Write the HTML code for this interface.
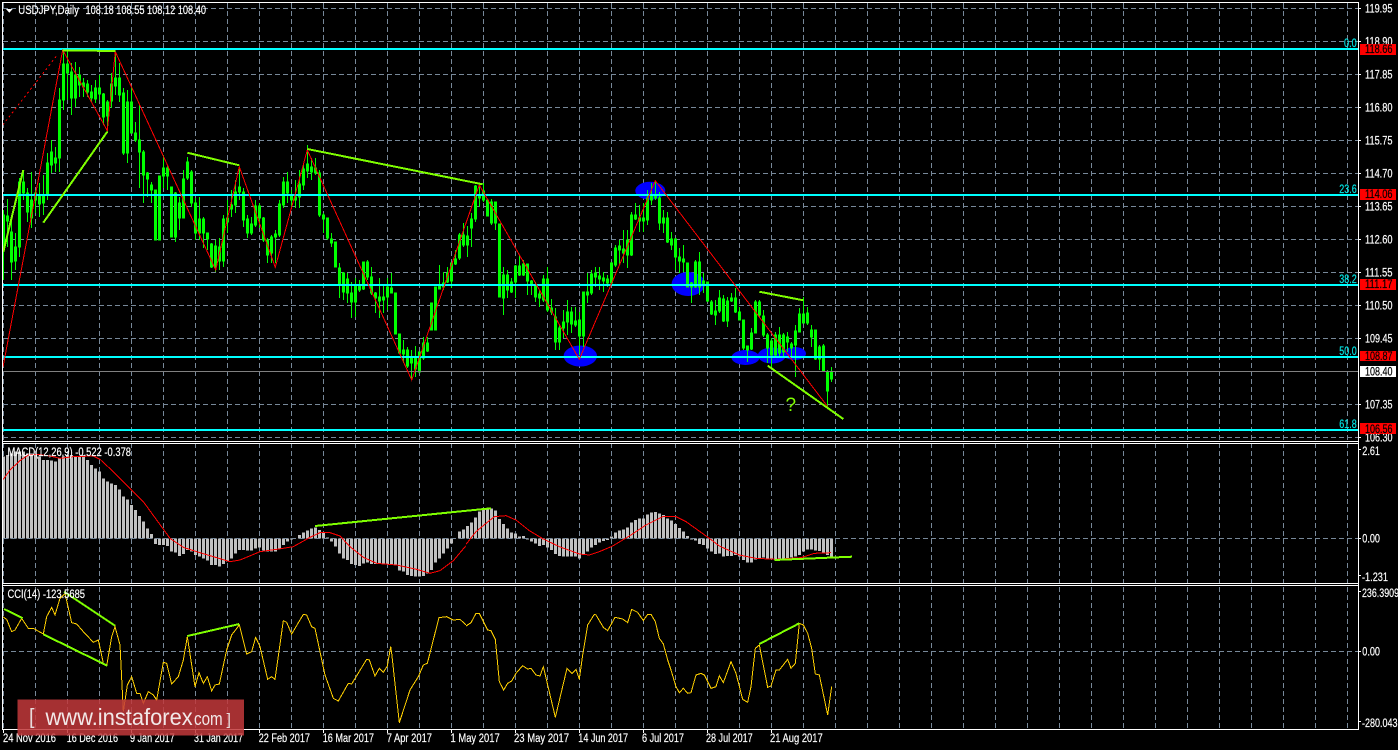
<!DOCTYPE html>
<html><head><meta charset="utf-8"><title>USDJPY,Daily</title>
<style>
html,body{margin:0;padding:0;background:#000;width:1398px;height:750px;overflow:hidden}
svg{display:block}
text{font-family:"Liberation Sans",sans-serif;font-size:11.5px;fill:#fff;stroke:#fff;stroke-width:.18px}
.f{fill:#00e6e6;stroke:#00e6e6}
.k{fill:#000;stroke:#000}
.w{stroke:none}
</style></head><body>
<svg width="1398" height="750" viewBox="0 0 1398 750" xmlns="http://www.w3.org/2000/svg">
<defs>
<pattern id="v" x="35" y="3" width="32" height="8" patternUnits="userSpaceOnUse"><rect width="1" height="5" fill="#778899"/></pattern>
<pattern id="h" x="3" y="8" width="8" height="33" patternUnits="userSpaceOnUse"><rect width="5" height="1" fill="#778899"/></pattern>
<clipPath id="c1"><rect x="3" y="3" width="1355" height="438"/></clipPath>
<clipPath id="c2"><rect x="3" y="444" width="1355" height="139"/></clipPath>
<clipPath id="c3"><rect x="3" y="586" width="1355" height="143"/></clipPath>
</defs>
<rect width="1398" height="750" fill="#000"/>
<!-- grid -->
<rect x="3" y="3" width="1355" height="438" fill="url(#v)"/>
<rect x="3" y="3" width="1355" height="438" fill="url(#h)"/>
<rect x="3" y="444" width="1355" height="139" fill="url(#v)"/>
<rect x="3" y="586" width="1355" height="143" fill="url(#v)"/>
<!-- blue ellipses -->
<g fill="#0000ff">
<ellipse cx="650.3" cy="190.7" rx="15" ry="9"/>
<ellipse cx="688.3" cy="284" rx="16.7" ry="12"/>
<ellipse cx="580.3" cy="356" rx="16.7" ry="10.5"/>
<ellipse cx="745.5" cy="357.5" rx="14" ry="7.5"/>
<ellipse cx="771.8" cy="355.5" rx="14" ry="8"/>
<ellipse cx="794.5" cy="353.5" rx="11.5" ry="6.5"/>
</g>
<!-- candles -->
<g transform="translate(-.5 0)" fill="none" shape-rendering="crispEdges" clip-path="url(#c1)">
<path stroke="#00ff00" stroke-width="1" d="M4 210V280M8 199V247M12 217V280M16 233V270M20 178V257M24 170V200M28 188V222M32 172V228M36 190V213M40 183V217M44 175V215M48 153V200M52 140V173M56 147V172M60 88V172M64 50V110M68 50V100M72 63V115M76 62V107M80 67V97M84 78V97M88 80V97M92 85V102M96 80V103M100 75V100M104 93V125M108 100V132M112 73V108M116 52V95M120 63V102M124 88V155M128 90V163M132 87V133M136 122V142M140 105V188M144 150V203M148 172V197M152 182V203M156 190V240M160 176V240M164 155V188M168 165V190M172 187V237M176 192V242M180 197V230M184 170V218M188 157V180M192 170V207M196 198V240M200 197V240M204 217V248M208 233V250M212 243V268M216 240V272M220 238V270M224 215V267M228 200V233M232 190V217M236 180V213M240 167V200M244 188V227M248 215V238M252 217V235M256 200V227M260 203V228M264 217V242M268 238V263M272 235V263M276 230V263M280 200V237M284 177V208M288 172V203M292 190V208M296 180V208M300 170V208M304 163V190M308 145V178M312 158V180M316 158V175M320 170V217M324 213V233M328 218V240M332 233V247M336 242V267M340 263V298M344 272V300M348 273V303M352 282V318M356 278V317M360 280V292M364 262V290M368 260V280M372 267V295M376 292V313M380 278V318M384 285V313M388 278V310M392 273V293M396 293V334M400 334V353M404 340V363M408 347V368M412 350V380M416 346V377M420 352V372M424 337V360M428 337V352M432 303V330M436 287V330M440 265V288M444 272V290M448 267V283M452 263V288M456 250V265M460 233V260M464 223V247M468 226V257M472 213V247M476 185V222M480 183V207M484 183V202M488 200V216M492 199V225M496 202V230M500 224V297M504 267V315M508 270V298M512 278V293M516 265V298M520 255V276M524 260V276M528 264V295M532 280V295M536 282V302M540 290V307M544 275V302M548 267V312M552 299V315M556 308V350M560 325V350M564 310V338M568 300V335M572 307V333M576 307V327M580 312V355M584 292V347M588 273V303M592 270V295M596 267V287M600 267V290M604 272V292M608 275V287M612 262V283M616 245V267M620 240V265M624 230V263M628 230V268M632 212V256M636 203V220M640 205V232M644 203V232M648 190V225M652 183V205M656 182V200M660 192V230M664 210V233M668 212V243M672 232V250M676 238V270M680 248V273M684 245V272M688 263V287M692 282V303M696 260V288M700 252V295M704 273V293M708 282V302M712 300V315M716 300V325M720 290V313M724 295V322M728 297V327M732 293V302M736 288V313M740 307V320M744 320V350M748 347V362M752 328V350M756 300V333M760 300V317M764 310V337M768 333V363M772 338V367M776 332V357M780 327V357M784 333V358M788 332V352M792 342V358M796 325V377M800 308V332M804 297V323M808 307V325M812 325V347M816 330V360M820 345V370M824 344V371M828 370V407M832 367V382"/>
<path id="b" stroke="#00ff00" stroke-width="3" stroke-linecap="square" d="M4 216V249M8 217V220M12 233V261M16 248V260M20 183V246M24 183V192M28 194V211M32 201V217M36 194V199M40 196V203M44 196V202M48 164V194M52 153V164M56 159V162M60 101V157M64 65V99M68 65V72M72 73V97M76 76V97M80 76V84M84 84V86M88 85V91M92 93V97M96 89V98M100 89V93M104 95V116M108 103V115M112 85V100M116 79V85M120 79V94M124 94V152M128 103V152M132 103V132M136 134V139M140 141V151M144 153V174M148 174V178M152 186V189M156 191V239M160 177V239M164 169V175M168 169V175M172 188V236M176 194V236M180 204V217M184 180V217M188 163V177M192 173V202M196 204V232M200 220V232M204 220V232M208 234V238M212 245V266M216 247V266M220 248V260M224 220V260M228 219V221M232 206V208M236 193V204M240 188V191M244 193V219M248 220V232M252 225V232M256 207V224M260 207V217M264 219V239M268 241V254M272 238V252M276 235V236M280 205V234M284 183V204M288 183V192M292 197V199M296 198V199M300 185V196M304 170V184M308 165V170M312 168V171M316 169V172M320 174V214M324 216V218M328 219V237M332 240V242M336 243V266M340 269V283M344 274V291M348 280V292M352 294V301M356 286V301M360 286V289M364 263V288M368 263V276M372 278V292M376 294V297M380 298V300M384 298V299M388 288V296M392 289V292M396 294V333M400 335V352M404 351V353M408 351V365M412 358V362M416 358V368M420 353V371M424 344V357M428 344V350M432 304V329M436 288V329M440 287V288M444 284V286M448 274V281M452 264V280M456 260V263M460 236V257M464 236V244M468 237V244M472 220V227M476 187V218M480 196V197M484 192V199M488 201V215M492 203V222M496 203V222M500 225V296M504 276V297M508 276V289M512 283V291M516 267V281M520 267V274M524 265V274M528 265V280M532 282V283M536 286V296M540 295V297M544 280V299M548 280V309M552 309V311M556 318V341M560 329V341M564 323V327M568 313V321M572 313V323M576 322V324M580 321V335M584 293V335M588 293V294M592 275V292M596 274V276M600 277V278M604 279V280M608 280V282M612 264V282M616 249V264M620 247V249M624 250V252M628 241V254M632 216V254M636 216V218M640 219V220M644 219V220M648 199V219M652 196V199M656 196V197M660 199V222M664 219V222M668 219V241M672 240V244M676 240V256M680 258V260M684 260V261M688 264V286M692 284V286M696 263V286M700 263V286M704 282V283M708 283V300M712 303V313M716 312V314M720 299V310M724 300V320M728 302V320M732 299V300M736 299V311M740 313V319M744 321V347M748 347V349M752 334V348M756 303V332M760 303V314M764 317V334M768 336V347M772 342V354M776 336V354M780 336V352M784 336V351M788 338V341M792 345V347M796 332V344M800 315V331M804 315V322M808 314V322M812 331V336M816 331V358M820 348V358M824 347V370M828 373V390M832 373V378"/>
<use href="#b" style="stroke:#fff;stroke-width:1;stroke-linecap:butt"/>
</g>
<!-- levels -->
<g shape-rendering="crispEdges">
<rect x="3" y="371" width="1355" height="1" fill="#808080"/>
<g fill="#00ffff">
<rect x="3" y="48" width="1355" height="2"/>
<rect x="3" y="194" width="1355" height="2"/>
<rect x="3" y="284" width="1355" height="2"/>
<rect x="3" y="356" width="1355" height="2"/>
<rect x="3" y="429" width="1355" height="2"/>
</g>
</g>
<!-- zigzag -->
<polyline fill="none" stroke="#ff0000" stroke-width="1" shape-rendering="crispEdges" points="3,367 62.7,50 107.3,130.7 115.3,51.7 215.7,270 239.3,166.7 275.3,267.3 307.3,150 411.7,380 466,223 479.3,185 579.3,359.3 655.3,180.7 827.7,406.7"/>
<polyline fill="none" stroke="#ff0000" stroke-width="1" stroke-dasharray="2 3" shape-rendering="crispEdges" points="2.7,125 57.3,55"/>
<!-- chartreuse trend lines -->
<g stroke="#7fff00" stroke-width="2" fill="none" shape-rendering="crispEdges">
<path d="M3.3 251.7L23.3 170"/>
<path d="M43.3 222.7L107.3 131.7"/>
<path d="M62.7 50.3L115.3 51"/>
<path d="M187.3 152.7L239.3 165.3"/>
<path d="M307.3 149L482.7 184.3"/>
<path d="M759.3 291.7L803.3 300.3"/>
<path d="M767.7 365.7L843.3 419"/>
</g>
<text class="w" x="785.5" y="411" style="font-size:19px;fill:#7fff00">?</text>
<!-- MACD histogram -->
<g clip-path="url(#c2)">
<g transform="translate(-.5 440) scale(1 .33333)" shape-rendering="crispEdges">
<path fill="none" stroke="#c0c0c0" stroke-width="3" d="M4 295V50M8 295V45M12 295V40M16 295V35M20 295V35M24 295V35M28 295V40M32 295V40M36 295V42M40 295V50M44 295V60M48 295V60M52 295V62M56 295V65M60 295V55M64 295V50M68 295V45M72 295V45M76 295V48M80 295V48M84 295V45M88 295V60M92 295V75M96 295V85M100 295V95M104 295V115M108 295V125M112 295V130M116 295V135M120 295V148M124 295V170M128 295V178M132 295V195M136 295V210M140 295V228M144 295V245M148 295V265M152 295V282M156 295V312M160 295V315M164 295V315M168 295V318M172 295V335M176 295V338M180 295V348M184 295V342M188 295V330M192 295V335M196 295V345M200 295V350M204 295V355M208 295V362M212 295V375M216 295V375M220 295V380M224 295V372M228 295V365M232 295V355M236 295V340M240 295V330M244 295V330M248 295V332M252 295V332M256 295V325M260 295V322M264 295V332M268 295V335M272 295V335M276 295V335M280 295V325M284 295V315M288 295V305M292 295V298M296 295V296M300 295V285M304 295V278M308 295V272M312 295V265M316 295V262M320 295V270M324 295V278M328 295V292M332 295V305M336 295V320M340 295V340M344 295V355M348 295V360M352 295V372M356 295V375M360 295V378M364 295V370M368 295V368M372 295V372M376 295V372M380 295V372M384 295V372M388 295V372M392 295V372M396 295V375M400 295V392M404 295V395M408 295V405M412 295V408M416 295V410M420 295V410M424 295V408M428 295V400M432 295V390M436 295V368M440 295V355M444 295V340M448 295V325M452 295V310M456 295V296M460 295V275M464 295V268M468 295V258M472 295V247M476 295V232M480 295V215M484 295V210M488 295V208M492 295V205M496 295V212M500 295V237M504 295V252M508 295V265M512 295V277M516 295V280M520 295V290M524 295V288M528 295V298M532 295V305M536 295V310M540 295V318M544 295V315M548 295V322M552 295V330M556 295V342M560 295V348M564 295V350M568 295V350M572 295V350M576 295V350M580 295V355M584 295V345M588 295V335M592 295V322M596 295V315M600 295V308M604 295V303M608 295V300M612 295V290M616 295V278M620 295V272M624 295V268M628 295V262M632 295V248M636 295V240M640 295V236M644 295V235M648 295V224M652 295V218M656 295V216M660 295V220M664 295V225M668 295V235M672 295V242M676 295V252M680 295V264M684 295V274M688 295V288M692 295V298M696 295V302M700 295V312M704 295V315M708 295V325M712 295V335M716 295V342M720 295V340M724 295V350M728 295V348M732 295V348M736 295V345M740 295V350M744 295V360M748 295V368M752 295V368M756 295V358M760 295V355M764 295V352M768 295V355M772 295V355M776 295V360M780 295V360M784 295V358M788 295V355M792 295V352M796 295V350M800 295V345M804 295V335M808 295V328M812 295V328M816 295V332M820 295V333M824 295V340M828 295V345M832 295V350"/>
</g>
</g>
<path d="M3 538.5H1358" stroke="#778899" stroke-width="1" stroke-dasharray="5 3" fill="none" shape-rendering="crispEdges"/>
<g clip-path="url(#c2)" fill="none" stroke="#ff0000" stroke-width="3" shape-rendering="crispEdges">
<polyline transform="translate(0 440) scale(.33333)" points="10,118 30,90 60,62 85,45 115,43 150,48 180,55 220,50 280,48 300,58 340,95 390,145 430,185 470,240 510,295 550,322 590,335 640,350 690,365 720,360 780,335 830,328 880,320 930,292 960,278 990,278 1020,288 1050,320 1090,352 1130,370 1190,375 1250,388 1290,400 1320,392 1360,362 1398,317"/>
<polyline transform="translate(466 440) scale(.33333)" points="0,313 30,275 60,250 85,230 120,227 150,240 190,272 230,296 280,320 340,342 370,345 400,335 440,318 490,288 540,255 590,230 630,230 660,245 730,295 760,318 820,345 870,355 930,358 1005,353 1045,340 1095,338"/>
</g>
<g stroke="#7fff00" stroke-width="2" fill="none" shape-rendering="crispEdges">
<path d="M315 526L491 508.3"/>
<path d="M774.3 560L852 556.7"/>
</g>
<!-- CCI -->
<path d="M3 651.5H1358" stroke="#778899" stroke-width="1" stroke-dasharray="5 3" fill="none" shape-rendering="crispEdges"/>
<g clip-path="url(#c3)" fill="none" stroke="#ffd000" stroke-width="3" shape-rendering="crispEdges">
<polyline transform="translate(0 580) scale(.33333)" points="8,110 20,118 35,155 45,150 65,115 85,145 100,145 130,162 140,110 155,82 165,105 180,55 195,40 215,128 230,132 250,155 280,187 295,180 310,250 320,258 335,170 345,140 360,195 370,395 382,315 395,290 410,340 420,340 430,370 445,335 460,345 470,360 490,247 500,250 515,312 535,290 550,240 562,170 585,320 597,278 610,310 622,290 635,333 645,315 658,312 680,210 695,165 718,135 740,222 755,215 767,172 780,200 803,298 815,290 825,298 850,122 860,127 875,162 910,103 920,105 935,140 945,145 975,285 1000,355 1015,363 1045,310 1055,312 1100,238 1108,240 1125,288 1138,265 1150,277 1162,258 1172,200 1175,220 1198,428 1230,330 1255,290 1270,255 1282,250 1317,113 1340,110 1360,120 1380,118 1398,135"/>
<polyline transform="translate(466 580) scale(.33333)" points="0,138 15,128 30,100 40,100 65,150 75,152 88,178 100,305 113,330 125,310 137,303 150,280 170,257 185,267 195,265 210,285 222,288 232,260 268,412 303,265 318,280 330,268 340,298 350,225 365,135 385,103 390,105 412,142 425,152 447,112 470,117 485,128 497,88 515,97 532,122 545,103 555,103 568,125 580,175 592,192 605,240 615,270 630,320 640,338 652,325 665,340 675,338 690,285 705,280 715,285 735,325 750,320 760,287 772,308 795,245 810,280 830,358 845,367 855,320 868,205 880,195 905,322 915,318 930,270 940,270 965,238 975,265 988,250 1000,130 1012,135 1025,160 1037,205 1048,282 1060,285 1085,405 1097,320"/>
</g>
<g stroke="#7fff00" stroke-width="2" fill="none" shape-rendering="crispEdges">
<path d="M4 609L22.7 618.3"/>
<path d="M64 591.7L115 625.7"/>
<path d="M43.3 634.3L107.3 665.7"/>
<path d="M187.3 636L239.3 624"/>
<path d="M759.3 644L799.3 623.3"/>
</g>
<!-- frame -->
<g fill="#fff" shape-rendering="crispEdges">
<rect x="2" y="2" width="1357" height="1"/>
<rect x="2" y="2" width="1" height="728"/>
<rect x="1358" y="2" width="1" height="728"/>
<rect x="2" y="441" width="1357" height="1"/>
<rect x="2" y="443" width="1357" height="1"/>
<rect x="2" y="583" width="1357" height="1"/>
<rect x="2" y="585" width="1357" height="1"/>
<rect x="2" y="729" width="1357" height="1"/>
<path d="M1359 8h2v1h-2zM1359 41h2v1h-2zM1359 74h2v1h-2zM1359 107h2v1h-2zM1359 140h2v1h-2zM1359 173h2v1h-2zM1359 206h2v1h-2zM1359 239h2v1h-2zM1359 272h2v1h-2zM1359 305h2v1h-2zM1359 338h2v1h-2zM1359 404h2v1h-2zM1359 437h2v1h-2zM1359 538h2v1h-2zM1359 651h2v1h-2zM1359 449h2v1h-2zM1359 575h2v1h-2zM1359 591h2v1h-2zM1359 721h2v1h-2z"/>
<path d="M3 730h1v3h-1zM67 730h1v3h-1zM131 730h1v3h-1zM195 730h1v3h-1zM259 730h1v3h-1zM323 730h1v3h-1zM387 730h1v3h-1zM451 730h1v3h-1zM515 730h1v3h-1zM579 730h1v3h-1zM643 730h1v3h-1zM707 730h1v3h-1zM771 730h1v3h-1z"/>
</g>
<!-- header -->
<polygon points="6,9 12.7,9 9.3,12.7" fill="#fff"/>
<text x="18.3" y="14" textLength="60.7" lengthAdjust="spacingAndGlyphs">USDJPY,Daily</text>
<text x="85.5" y="14" textLength="120.5" lengthAdjust="spacingAndGlyphs">108.18 108.55 108.12 108.40</text>
<text x="7.5" y="456" textLength="123.5" lengthAdjust="spacingAndGlyphs">MACD(12,26,9) -0.522 -0.378</text>
<text x="7.5" y="598" textLength="77.5" lengthAdjust="spacingAndGlyphs">CCI(14) -123.5685</text>
<!-- fib labels -->
<text class="f" x="1344" y="47" textLength="12.7" lengthAdjust="spacingAndGlyphs">0.0</text>
<text class="f" x="1339.3" y="193" textLength="17.4" lengthAdjust="spacingAndGlyphs">23.6</text>
<text class="f" x="1339.3" y="283" textLength="17.4" lengthAdjust="spacingAndGlyphs">38.2</text>
<text class="f" x="1339.3" y="355" textLength="17.4" lengthAdjust="spacingAndGlyphs">50.0</text>
<text class="f" x="1339.3" y="428" textLength="17.4" lengthAdjust="spacingAndGlyphs">61.8</text>
<!-- price axis -->
<text x="1365" y="12.5" textLength="27.5" lengthAdjust="spacingAndGlyphs">119.95</text>
<text x="1365" y="45.5" textLength="27.5" lengthAdjust="spacingAndGlyphs">118.90</text>
<text x="1365" y="78.5" textLength="27.5" lengthAdjust="spacingAndGlyphs">117.85</text>
<text x="1365" y="111.5" textLength="27.5" lengthAdjust="spacingAndGlyphs">116.80</text>
<text x="1365" y="144.5" textLength="27.5" lengthAdjust="spacingAndGlyphs">115.75</text>
<text x="1365" y="177.5" textLength="27.5" lengthAdjust="spacingAndGlyphs">114.70</text>
<text x="1365" y="210.5" textLength="27.5" lengthAdjust="spacingAndGlyphs">113.65</text>
<text x="1365" y="243.5" textLength="27.5" lengthAdjust="spacingAndGlyphs">112.60</text>
<text x="1365" y="276.5" textLength="27.5" lengthAdjust="spacingAndGlyphs">111.55</text>
<text x="1365" y="309.5" textLength="27.5" lengthAdjust="spacingAndGlyphs">110.50</text>
<text x="1365" y="342.5" textLength="27.5" lengthAdjust="spacingAndGlyphs">109.45</text>
<text x="1365" y="408.5" textLength="27.5" lengthAdjust="spacingAndGlyphs">107.35</text>
<text x="1365" y="441.5" textLength="27.5" lengthAdjust="spacingAndGlyphs">106.30</text>
<g shape-rendering="crispEdges">
<rect x="1360" y="44" width="36" height="11" fill="#ff0000"/>
<rect x="1360" y="189" width="36" height="11" fill="#ff0000"/>
<rect x="1360" y="279" width="36" height="11" fill="#ff0000"/>
<rect x="1360" y="351" width="36" height="10" fill="#ff0000"/>
<rect x="1360" y="366" width="36" height="11" fill="#ffffff"/>
<rect x="1360" y="423" width="36" height="11" fill="#ff0000"/>
</g>
<text class="k" x="1365" y="53" textLength="27.5" lengthAdjust="spacingAndGlyphs">118.66</text>
<text class="k" x="1365" y="198" textLength="27.5" lengthAdjust="spacingAndGlyphs">114.06</text>
<text class="k" x="1365" y="288" textLength="27.5" lengthAdjust="spacingAndGlyphs">111.17</text>
<text class="k" x="1365" y="360" textLength="27.5" lengthAdjust="spacingAndGlyphs">108.87</text>
<text class="k" x="1365" y="375.5" textLength="27.5" lengthAdjust="spacingAndGlyphs">108.40</text>
<text class="k" x="1365" y="433" textLength="27.5" lengthAdjust="spacingAndGlyphs">106.56</text>
<text x="1362.3" y="455" textLength="17.7" lengthAdjust="spacingAndGlyphs">2.61</text>
<text x="1362.3" y="542.5" textLength="17.7" lengthAdjust="spacingAndGlyphs">0.00</text>
<text x="1362" y="581" textLength="26" lengthAdjust="spacingAndGlyphs">-1.231</text>
<text x="1362" y="597" textLength="37" lengthAdjust="spacingAndGlyphs">236.3909</text>
<text x="1362.3" y="655.5" textLength="17.7" lengthAdjust="spacingAndGlyphs">0.00</text>
<text x="1362" y="727" textLength="35.5" lengthAdjust="spacingAndGlyphs">-280.043</text>
<!-- time axis -->
<text x="3" y="742" textLength="53" lengthAdjust="spacingAndGlyphs">24 Nov 2016</text>
<text x="66.7" y="742" textLength="51.3" lengthAdjust="spacingAndGlyphs">16 Dec 2016</text>
<text x="130" y="742" textLength="44.7" lengthAdjust="spacingAndGlyphs">9 Jan 2017</text>
<text x="194" y="742" textLength="49" lengthAdjust="spacingAndGlyphs">31 Jan 2017</text>
<text x="258.7" y="742" textLength="51.3" lengthAdjust="spacingAndGlyphs">22 Feb 2017</text>
<text x="322.7" y="742" textLength="51.3" lengthAdjust="spacingAndGlyphs">16 Mar 2017</text>
<text x="386.7" y="742" textLength="45.3" lengthAdjust="spacingAndGlyphs">7 Apr 2017</text>
<text x="450.5" y="742" textLength="49.2" lengthAdjust="spacingAndGlyphs">1 May 2017</text>
<text x="514" y="742" textLength="55" lengthAdjust="spacingAndGlyphs">23 May 2017</text>
<text x="578.3" y="742" textLength="49.7" lengthAdjust="spacingAndGlyphs">14 Jun 2017</text>
<text x="642" y="742" textLength="42" lengthAdjust="spacingAndGlyphs">6 Jul 2017</text>
<text x="706" y="742" textLength="46.7" lengthAdjust="spacingAndGlyphs">28 Jul 2017</text>
<text x="770" y="742" textLength="52.7" lengthAdjust="spacingAndGlyphs">21 Aug 2017</text>
<!-- watermark -->
<rect x="17.3" y="699.3" width="226.7" height="36.4" fill="#c2383b" fill-opacity=".85" shape-rendering="crispEdges"/>
<text class="w" x="29" y="723.5" style="font-size:21px;fill:#e8dcdc" textLength="5.5" lengthAdjust="spacingAndGlyphs">[</text>
<text class="w" x="45.5" y="725" style="font-size:23px;fill:#f2e8e8" textLength="147.2" lengthAdjust="spacingAndGlyphs">www.instaforex</text>
<text class="w" x="194" y="725" style="font-size:18px;fill:#f2e8e8" textLength="28.7" lengthAdjust="spacingAndGlyphs">com</text>
<text class="w" x="226.5" y="724.7" style="font-size:16px;fill:#e8dcdc" textLength="4.5" lengthAdjust="spacingAndGlyphs">]</text>
</svg>
</body></html>
